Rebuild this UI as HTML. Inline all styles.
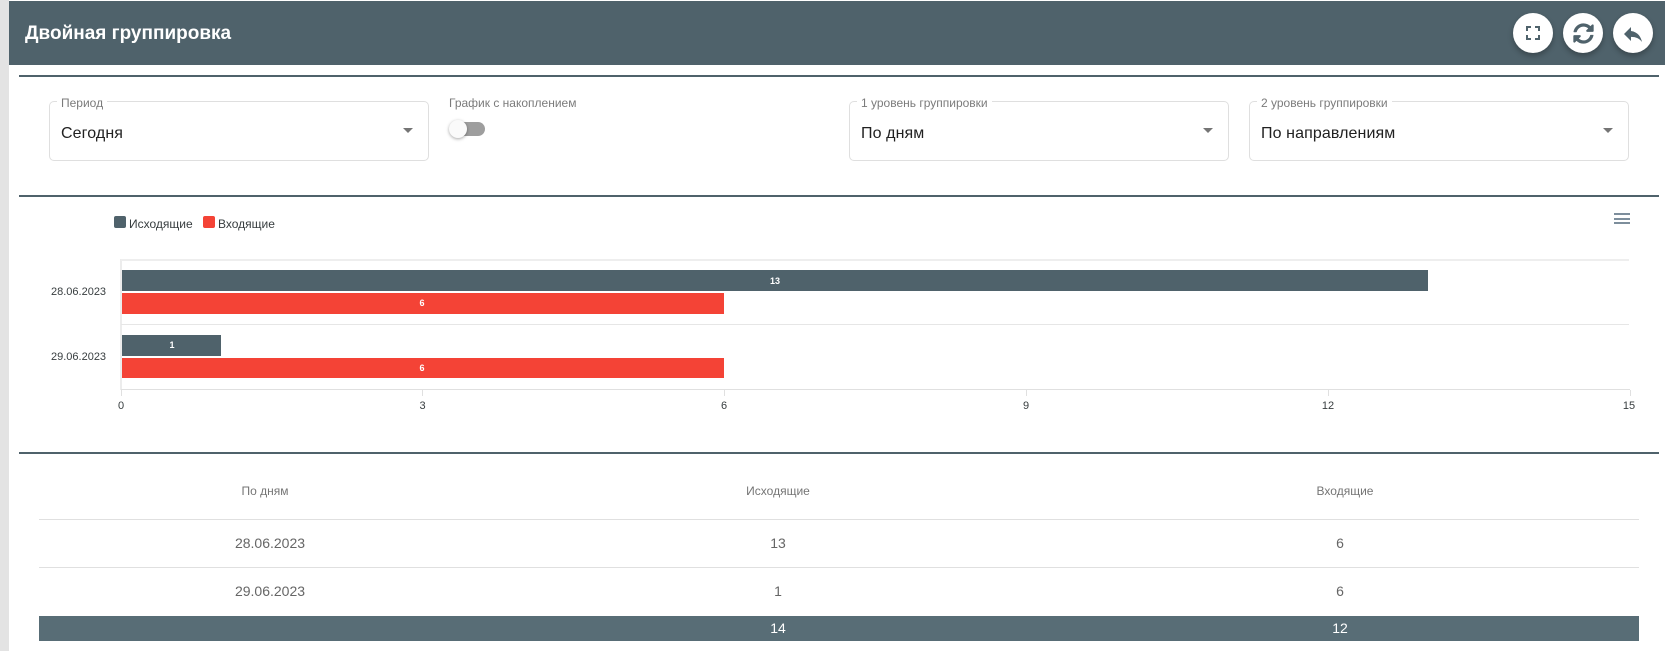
<!DOCTYPE html>
<html lang="ru"><head><meta charset="utf-8"><title>Двойная группировка</title>
<style>
html,body{margin:0;padding:0;background:#fff}
body{position:relative;width:1665px;height:651px;overflow:hidden;font-family:"Liberation Sans",sans-serif;color:#212529}
.a{position:absolute;white-space:nowrap}
.c{transform:translateX(-50%)}
.rule{position:absolute;left:19px;width:1640px;height:2px;background:#4f626b}
.sel{position:absolute;top:101px;height:58px;border:1px solid #dfdfdf;border-radius:5px;box-sizing:content-box}
.lab{position:absolute;top:-5px;left:7px;padding:0 4px;height:12px;background:#fff;font-size:12px;line-height:12px;color:#7b7b7b}
.val{position:absolute;left:11px;top:22px;font-size:16px;line-height:20px;color:#212121;letter-spacing:.1px}
.arr{position:absolute;top:26px;width:0;height:0;border-left:5px solid transparent;border-right:5px solid transparent;border-top:5px solid #757575}
.btn{position:absolute;top:13px;width:40px;height:40px;border-radius:50%;background:#fff;box-shadow:0 3px 6px rgba(0,0,0,.28)}
.th{font-size:12px;line-height:14px;color:#757575}
.td{font-size:14px;line-height:16px;color:#666}
.lbl{font-size:11px;line-height:12px;color:#373d3f}
.bar{position:absolute}
.v{position:absolute;font-size:9px;font-weight:bold;color:#fff;line-height:10px;transform:translateX(-50%)}
</style></head><body>
<div class="a" style="left:0;top:0;width:9px;height:651px;background:#e3e3e3"></div>
<div class="a" style="left:9px;top:646px;width:8px;height:5px;background:#fff;border-bottom-left-radius:6px"></div>
<div class="a" style="left:9px;top:1px;width:1656px;height:64px;background:#4f626b"></div>
<div class="a" style="left:25px;top:22px;font-size:19px;line-height:24px;font-weight:bold;color:#fff">Двойная группировка</div>
<div class="btn" style="left:1513px"><svg viewBox="0 0 24 24" style="position:absolute;left:8px;top:8px;width:24px;height:24px"><path d="M7 14H5v5h5v-2H7v-3zm-2-4h2V7h3V5H5v5zm12 7h-3v2h5v-5h-2v3zM14 5v2h3v3h2V5h-5z" fill="#4f626b"/></svg></div>
<div class="btn" style="left:1563px"><svg viewBox="0 0 512 512" style="position:absolute;left:9.500px;top:9.500px;width:21px;height:21px"><path d="M370.72 133.28C339.458 104.008 298.888 87.962 255.848 88c-77.458.068-144.328 53.178-162.791 126.85-1.344 5.363-6.122 9.15-11.651 9.15H24.103c-7.498 0-13.194-6.807-11.807-14.176C33.933 94.924 134.813 8 256 8c66.448 0 126.791 26.136 171.315 68.685L463.03 40.97C478.149 25.851 504 36.559 504 57.941V192c0 13.255-10.745 24-24 24H345.941c-21.382 0-32.09-25.851-16.971-40.971l41.75-41.749zM32 296h134.059c21.382 0 32.09 25.851 16.971 40.971l-41.75 41.75c31.262 29.273 71.835 45.319 114.876 45.28 77.418-.07 144.315-53.144 162.787-126.849 1.344-5.363 6.122-9.15 11.651-9.15h57.304c7.498 0 13.194 6.807 11.807 14.176C478.067 417.076 377.187 504 256 504c-66.448 0-126.791-26.136-171.315-68.685L48.97 471.03C33.851 486.149 8 475.441 8 454.059V320c0-13.255 10.745-24 24-24z" fill="#4f626b"/></svg></div>
<div class="btn" style="left:1613px"><svg viewBox="0 0 24 24" style="position:absolute;left:8px;top:9px;width:24px;height:24px"><path d="M10 9V5l-7 7 7 7v-4.100c5 0 8.500 1.600 11 5.100-1-5-4-10-11-11z" fill="#4f626b"/></svg></div>

<div class="rule" style="top:75px"></div>
<div class="rule" style="top:195px"></div>
<div class="rule" style="top:452px"></div>

<div class="sel" style="left:49px;width:378px"><span class="lab">Период</span><span class="val">Сегодня</span><i class="arr" style="left:353px"></i></div>
<div class="a" style="left:449px;top:96px;font-size:12px;line-height:14px;color:#7b7b7b">График с накоплением</div>
<div class="a" style="left:452px;top:122px;width:33px;height:14px;border-radius:7px;background:#9e9e9e"></div>
<div class="a" style="left:449px;top:120px;width:18px;height:18px;border-radius:50%;background:#fafafa;box-shadow:0 1px 3px rgba(0,0,0,.35)"></div>
<div class="sel" style="left:849px;width:378px"><span class="lab">1 уровень группировки</span><span class="val">По дням</span><i class="arr" style="left:353px"></i></div>
<div class="sel" style="left:1249px;width:378px"><span class="lab">2 уровень группировки</span><span class="val">По направлениям</span><i class="arr" style="left:353px"></i></div>

<div class="a" style="left:114px;top:216px;width:12px;height:12px;border-radius:2px;background:#4f626b"></div>
<div class="a" style="left:129px;top:217px;font-size:12px;line-height:14px;color:#373d3f">Исходящие</div>
<div class="a" style="left:203px;top:216px;width:12px;height:12px;border-radius:2px;background:#f44336"></div>
<div class="a" style="left:218px;top:217px;font-size:12px;line-height:14px;color:#373d3f">Входящие</div>
<div class="a" style="left:1614px;top:213px;width:16px;height:2px;background:#7d8e9c"></div>
<div class="a" style="left:1614px;top:217.500px;width:16px;height:2px;background:#7d8e9c"></div>
<div class="a" style="left:1614px;top:222px;width:16px;height:2px;background:#7d8e9c"></div>

<div class="a" style="left:120px;top:259px;width:2px;height:131px;background:#ececec"></div>
<div class="a" style="left:121px;top:259px;width:1508px;height:2px;background:#eeeeee"></div>
<div class="a" style="left:121px;top:324px;width:1508px;height:1px;background:#e6e6e6"></div>
<div class="a" style="left:121px;top:389px;width:1509px;height:1px;background:#e0e0e0"></div>
<div class="a" style="left:121px;top:390px;width:1px;height:6px;background:#e0e0e0"></div>
<div class="a" style="left:422px;top:390px;width:1px;height:6px;background:#e0e0e0"></div>
<div class="a" style="left:724px;top:390px;width:1px;height:6px;background:#e0e0e0"></div>
<div class="a" style="left:1026px;top:390px;width:1px;height:6px;background:#e0e0e0"></div>
<div class="a" style="left:1328px;top:390px;width:1px;height:6px;background:#e0e0e0"></div>
<div class="a" style="left:1630px;top:390px;width:1px;height:6px;background:#e0e0e0"></div>

<div class="bar" style="left:121.500px;top:270px;width:1306px;height:20.500px;background:#4f626b"></div>
<div class="bar" style="left:121.500px;top:293px;width:602.500px;height:20.500px;background:#f44336"></div>
<div class="bar" style="left:121.500px;top:335px;width:99.500px;height:20.500px;background:#4f626b"></div>
<div class="bar" style="left:121.500px;top:357.500px;width:602.500px;height:20.500px;background:#f44336"></div>
<div class="v" style="left:775px;top:276px">13</div>
<div class="v" style="left:422px;top:298px">6</div>
<div class="v" style="left:172px;top:340px">1</div>
<div class="v" style="left:422px;top:363px">6</div>

<div class="a lbl" style="left:51px;top:286px">28.06.2023</div>
<div class="a lbl" style="left:51px;top:351px">29.06.2023</div>
<div class="a lbl c" style="left:121px;top:400px">0</div>
<div class="a lbl c" style="left:422.500px;top:400px">3</div>
<div class="a lbl c" style="left:724px;top:400px">6</div>
<div class="a lbl c" style="left:1026px;top:400px">9</div>
<div class="a lbl c" style="left:1328px;top:400px">12</div>
<div class="a lbl c" style="left:1629px;top:400px">15</div>

<div class="a th c" style="left:265px;top:484px">По дням</div>
<div class="a th c" style="left:778px;top:484px">Исходящие</div>
<div class="a th c" style="left:1345px;top:484px">Входящие</div>
<div class="a" style="left:39px;top:519px;width:1600px;height:1px;background:#e0e0e0"></div>
<div class="a" style="left:39px;top:567px;width:1600px;height:1px;background:#e0e0e0"></div>
<div class="a td c" style="left:270px;top:535px">28.06.2023</div>
<div class="a td c" style="left:778px;top:535px">13</div>
<div class="a td c" style="left:1340px;top:535px">6</div>
<div class="a td c" style="left:270px;top:583px">29.06.2023</div>
<div class="a td c" style="left:778px;top:583px">1</div>
<div class="a td c" style="left:1340px;top:583px">6</div>
<div class="a" style="left:39px;top:616px;width:1600px;height:25px;background:#586d76"></div>
<div class="a c" style="left:778px;top:620px;font-size:14px;line-height:16px;color:#fff">14</div>
<div class="a c" style="left:1340px;top:620px;font-size:14px;line-height:16px;color:#fff">12</div>
</body></html>
